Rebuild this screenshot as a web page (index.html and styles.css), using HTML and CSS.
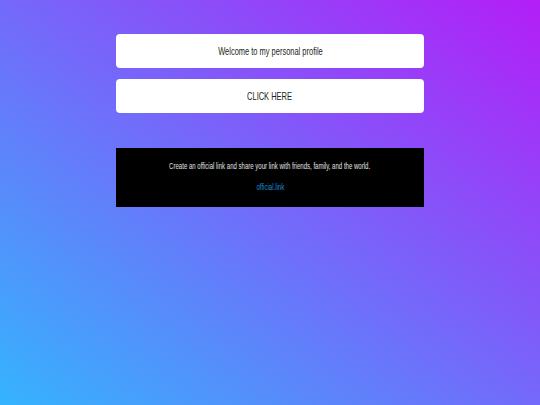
FILE: index.html
```html
<!DOCTYPE html>
<html>
<head>
<meta charset="utf-8">
<link rel="stylesheet" href="styles.css">
</head>
<body>
<div class="page">
  <div class="links">
    <a class="card" href="#"><span class="narrow">Welcome to my personal profile</span></a>
    <a class="card" href="#"><span class="narrow">CLICK HERE</span></a>
  </div>
  <div class="footer">
    <p class="footer-text"><span class="narrow">Create an official link and share your link with friends, family, and the world.</span></p>
    <a class="footer-link" href="#"><span class="narrow">official.link</span></a>
  </div>
</div>
</body>
</html>
```
FILE: styles.css
```css
html, body {
  margin: 0;
  padding: 0;
  height: 100%;
}
body {
  background: linear-gradient(to top right, #35b4fd 0%, #b31ef7 100%);
  font-family: "Liberation Sans", Arial, sans-serif;
}
.page {
  width: 308px;
  margin: 0 auto;
  padding-top: 34px;
  display: flex;
  flex-direction: column;
}
.links {
  display: flex;
  flex-direction: column;
  gap: 11px;
}
.narrow {
  display: inline-block;
  transform: scaleX(0.65);
  white-space: nowrap;
}
.card {
  display: flex;
  align-items: center;
  justify-content: center;
  height: 34px;
  background: #fff;
  border-radius: 4px;
  color: #222;
  font-size: 11.5px;
  text-decoration: none;
}
.footer {
  margin-top: 35px;
  height: 59px;
  background: #000;
  display: flex;
  flex-direction: column;
  align-items: center;
  box-sizing: border-box;
  padding-top: 13px;
}
.footer-text {
  margin: 0;
  color: #e0e0e0;
  font-size: 9.3px;
  line-height: 11px;
}
.footer-link {
  margin-top: 10px;
  color: #1c8fd8;
  font-size: 9.3px;
  line-height: 11px;
  text-decoration: none;
}
```
